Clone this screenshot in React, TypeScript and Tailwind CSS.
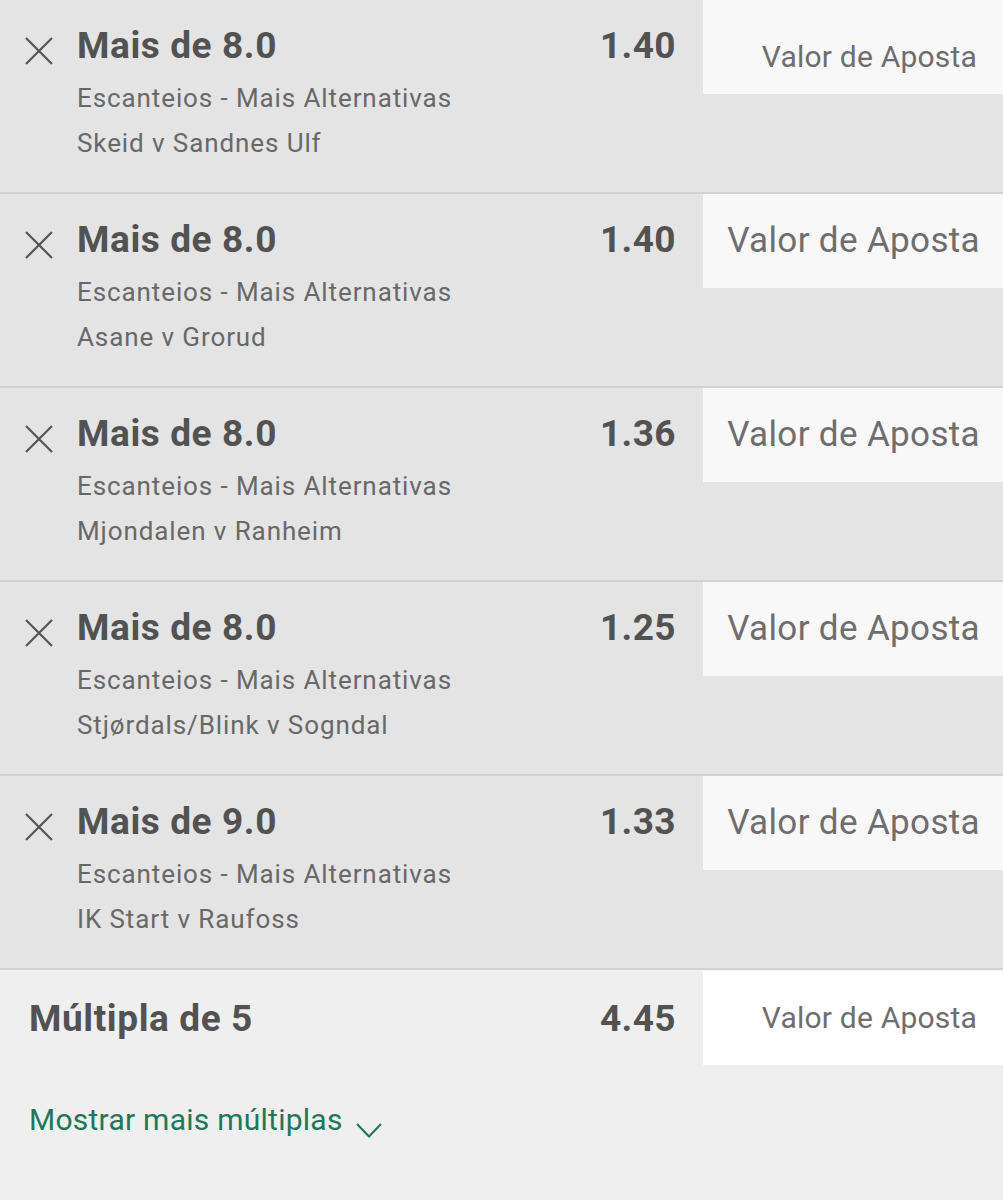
import { useState } from 'react';

type Bet = {
  pick: string;
  market: string;
  event: string;
  odds: string;
};

const bets: Bet[] = [
  { pick: 'Mais de 8.0', market: 'Escanteios - Mais Alternativas', event: 'Skeid v Sandnes Ulf', odds: '1.40' },
  { pick: 'Mais de 8.0', market: 'Escanteios - Mais Alternativas', event: 'Asane v Grorud', odds: '1.40' },
  { pick: 'Mais de 8.0', market: 'Escanteios - Mais Alternativas', event: 'Mjondalen v Ranheim', odds: '1.36' },
  { pick: 'Mais de 8.0', market: 'Escanteios - Mais Alternativas', event: 'Stjørdals/Blink v Sogndal', odds: '1.25' },
  { pick: 'Mais de 9.0', market: 'Escanteios - Mais Alternativas', event: 'IK Start v Raufoss', odds: '1.33' },
];

function CloseIcon() {
  return (
    <svg width="28" height="28" viewBox="0 0 28 28" fill="none" stroke="#555555" strokeWidth="2.2">
      <path d="M1 1 L27 27 M27 1 L1 27" />
    </svg>
  );
}

function StakeInput({ small }: { small?: boolean }) {
  return (
    <div className="w-[300px] h-[94px] shrink-0 bg-[#f8f8f8] flex items-center justify-end">
      {small ? (
        <span className="text-[30px] leading-[36px] tracking-[0.2px] text-[#6e6e6e] pr-[26px] pt-[20px]">Valor de Aposta</span>
      ) : (
        <span className="text-[35px] leading-[40px] tracking-[0.35px] text-[#6e6e6e] pr-[23px]">Valor de Aposta</span>
      )}
    </div>
  );
}

function BetRow({ bet, first }: { bet: Bet; first: boolean }) {
  return (
    <div className="flex items-start h-[194px] bg-[#e4e4e4] border-b-2 border-[#d2d2d2]">
      <div className="w-[77px] shrink-0 pl-[25px] pt-[37px]">
        <CloseIcon />
      </div>
      <div className="flex-1 pt-[24px]">
        <div className="text-[37px] leading-[44px] tracking-[0.6px] font-bold text-[#525252]">{bet.pick}</div>
        <div className="mt-[8px] text-[26px] leading-[45px] tracking-[0.9px] text-[#686868]">{bet.market}</div>
        <div className="text-[26px] leading-[45px] tracking-[0.9px] text-[#686868]">{bet.event}</div>
      </div>
      <div className="pt-[24px] pr-[27px] text-[37px] leading-[44px] tracking-[0.4px] font-bold text-[#525252]">{bet.odds}</div>
      <StakeInput small={first} />
    </div>
  );
}

export default function App() {
  const [expanded, setExpanded] = useState(false);

  return (
    <main className="w-[1003px] min-h-[1200px] bg-[#efefef] font-['Roboto',sans-serif]">
      {bets.map((bet, i) => (
        <BetRow key={i} bet={bet} first={i === 0} />
      ))}

      {/* Multiple */}
      <div className="flex items-center h-[94px] mt-[1px]">
        <div className="flex-1 pl-[29px] pt-[2px] text-[37px] leading-[44px] tracking-[0.6px] font-bold text-[#525252]">Múltipla de 5</div>
        <div className="pr-[27px] pt-[2px] text-[37px] leading-[44px] tracking-[0.4px] font-bold text-[#525252]">4.45</div>
        <div className="w-[300px] h-[94px] shrink-0 bg-white flex items-center justify-end">
          <span className="text-[30px] leading-[36px] tracking-[0.2px] text-[#6e6e6e] pr-[26px]">Valor de Aposta</span>
        </div>
      </div>

      <button
        className="flex items-start mt-[35px] ml-[29px] text-[#1b7a56]"
        onClick={() => setExpanded(!expanded)}
      >
        <span className="text-[30px] leading-[40px] tracking-[0.25px]">Mostrar mais múltiplas</span>
        <svg className="ml-[13px] mt-[23px]" width="26" height="15" viewBox="0 0 26 15" fill="none" stroke="#1b7a56" strokeWidth="2">
          <path d="M1 1 L13 13.5 L25 1" />
        </svg>
      </button>
    </main>
  );
}
